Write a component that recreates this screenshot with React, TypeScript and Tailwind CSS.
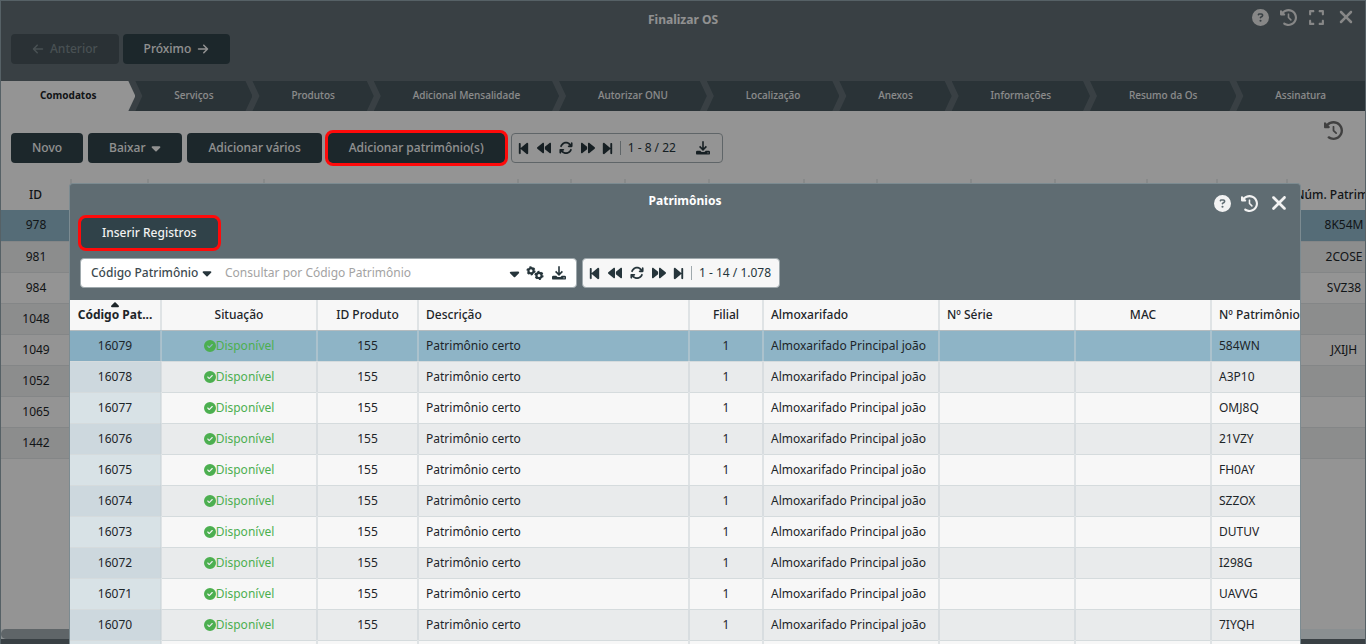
import { useState } from "react";
import {
  FaArrowLeft,
  FaArrowRight,
  FaArrowsRotate,
  FaBackward,
  FaBackwardStep,
  FaCaretDown,
  FaCaretUp,
  FaCircleCheck,
  FaCircleQuestion,
  FaClockRotateLeft,
  FaExpand,
  FaForward,
  FaForwardStep,
  FaXmark,
} from "react-icons/fa6";

const tabs = [
  "Comodatos",
  "Serviços",
  "Produtos",
  "Adicional Mensalidade",
  "Autorizar ONU",
  "Localização",
  "Anexos",
  "Informações",
  "Resumo da Os",
  "Assinatura",
];

const comodatos = [
  { id: "978", numero: "8K54M" },
  { id: "981", numero: "2COSE" },
  { id: "984", numero: "SVZ38" },
  { id: "1048", numero: "" },
  { id: "1049", numero: "JXIJH" },
  { id: "1052", numero: "" },
  { id: "1065", numero: "" },
  { id: "1442", numero: "" },
];

// columns between "ID" and "Núm. Patrimônio"
const innerCols = [
  "w-[77px]",
  "w-[116px]",
  "w-[254px]",
  "w-[53px]",
  "w-[54px]",
  "w-[84px]",
  "w-[95px]",
  "w-[73px]",
  "w-[94px]",
  "w-[84px]",
  "w-[92px]",
  "w-[70px]",
  "w-[70px]",
];

const patrimonios = [
  { codigo: "16079", numero: "584WN" },
  { codigo: "16078", numero: "A3P10" },
  { codigo: "16077", numero: "OMJ8Q" },
  { codigo: "16076", numero: "21VZY" },
  { codigo: "16075", numero: "FH0AY" },
  { codigo: "16074", numero: "SZZOX" },
  { codigo: "16073", numero: "DUTUV" },
  { codigo: "16072", numero: "I298G" },
  { codigo: "16071", numero: "UAVVG" },
  { codigo: "16070", numero: "7IYQH" },
];

function DownloadIcon() {
  return (
    <svg width="14" height="14" viewBox="0 0 14 14" fill="none" aria-hidden="true">
      <path d="M7 0.3V8.6M3.6 5.4L7 8.8L10.4 5.4" stroke="currentColor" strokeWidth="1.6" />
      <path
        d="M1.4 9.8H4.2L5.6 11H8.4L9.8 9.8H12.6Q14 9.8 14 11V12.4Q14 13.6 12.6 13.6H1.4Q0 13.6 0 12.4V11Q0 9.8 1.4 9.8Z"
        fill="currentColor"
      />
      <circle cx="12" cy="11.8" r="0.6" fill="#fff" />
    </svg>
  );
}

function GearsIcon() {
  return (
    <svg width="18" height="14" viewBox="0 0 18 14" fill="none" stroke="currentColor" aria-hidden="true">
      <circle cx="5" cy="4.8" r="2.6" strokeWidth="2.2" />
      <circle cx="5" cy="4.8" r="3.9" strokeWidth="1.4" strokeDasharray="2.04 2.04" />
      <circle cx="13" cy="9.4" r="2.6" strokeWidth="2.2" />
      <circle cx="13" cy="9.4" r="3.9" strokeWidth="1.4" strokeDasharray="2.04 2.04" />
    </svg>
  );
}

function Button({
  children,
  disabled,
  highlighted,
}: {
  children: React.ReactNode;
  disabled?: boolean;
  highlighted?: boolean;
}) {
  return (
    <div className={highlighted ? "relative mx-px" : "relative"}>
      <button
        disabled={disabled}
        className={`flex h-[30px] items-center gap-[6px] rounded px-[21px] font-medium ${
          disabled ? "bg-[#465359] text-[#7a868b]" : "bg-[#304249] text-[#f2f2f2]"
        }`}
      >
        {children}
      </button>
      {highlighted && (
        <span className="pointer-events-none absolute -inset-[3px] z-30 rounded-lg border-3 border-[#ff0a0a]" />
      )}
    </div>
  );
}

function Pager({ range, download }: { range: string; download?: boolean }) {
  return (
    <div className="flex h-[30px] items-center rounded border border-[#9fa9ad] bg-[#f7f7f7] pr-2 pl-[7px] text-[#26353b]">
      <button aria-label="Primeira página" className="w-[10px]">
        <FaBackwardStep size={15} className="-mx-[3px]" />
      </button>
      <button aria-label="Página anterior" className="ml-2">
        <FaBackward size={14} />
      </button>
      <button aria-label="Atualizar" className="ml-2">
        <FaArrowsRotate size={14} />
      </button>
      <button aria-label="Próxima página" className="ml-2">
        <FaForward size={14} />
      </button>
      <button aria-label="Última página" className="ml-2 w-[10px]">
        <FaForwardStep size={15} className="-mx-[3px]" />
      </button>
      <span className="ml-[7px] h-[14px] w-px bg-[#9fa9ad]" />
      <span className="ml-[7px]">{range}</span>
      {download && (
        <button aria-label="Baixar registros" className="mr-1 ml-5">
          <DownloadIcon />
        </button>
      )}
    </div>
  );
}

function ComodatosTable() {
  const line = "border-r-2 border-r-[#e3e6e7]";
  return (
    <div className="flex-1 overflow-hidden">
      <table className="w-[1400px] table-fixed border-collapse">
        <thead>
          <tr className="h-[31px]">
            <th className={`w-[70px] font-medium ${line}`}>ID</th>
            {innerCols.map((width, i) => (
              <td key={i} className={`${width} ${line}`} />
            ))}
            <th className="font-medium whitespace-nowrap">Núm. Patrimônio</th>
          </tr>
        </thead>
        <tbody>
          {comodatos.map((row, i) => (
            <tr
              key={row.id}
              className={`h-[31px] border-b border-[#dcdfe1] text-center ${
                i === 0 ? "bg-[#8eb4c6]" : i % 2 ? "bg-[#e9ebec]" : "bg-[#f7f7f7]"
              }`}
            >
              <td>{row.id}</td>
              <td colSpan={innerCols.length} />
              <td>{row.numero}</td>
            </tr>
          ))}
        </tbody>
      </table>
    </div>
  );
}

function PatrimoniosTable() {
  const [selected, setSelected] = useState("16079");
  const line = "border-r-2 border-r-[#c8d0d3]/50";
  const head = `font-medium ${line}`;

  return (
    <table className="w-full min-w-[1277px] table-fixed border-collapse whitespace-nowrap">
      <thead>
        <tr className="h-[30px] border-b border-[#b4bbbe] bg-[#f7f7f7]">
          <th className={`w-[91px] font-bold ${line}`}>
            <span className="relative">
              <FaCaretUp size={13} className="absolute -top-[7px] left-1/2 -translate-x-1/2" />
              Código Pat...
            </span>
          </th>
          <th className={`w-[156px] ${head}`}>Situação</th>
          <th className={`w-[101px] ${head}`}>ID Produto</th>
          <th className={`w-[271px] px-[7px] text-left ${head}`}>Descrição</th>
          <th className={`w-[74px] ${head}`}>Filial</th>
          <th className={`w-[176px] px-[7px] text-left ${head}`}>Almoxarifado</th>
          <th className={`w-[136px] px-[7px] text-left ${head}`}>Nº Série</th>
          <th className={`w-[136px] ${head}`}>MAC</th>
          <th className="px-[7px] text-left font-medium">Nº Patrimônio</th>
        </tr>
      </thead>
      <tbody>
        {patrimonios.map((row, i) => {
          const active = row.codigo === selected;
          const odd = i % 2 === 1;
          return (
            <tr
              key={row.codigo}
              onClick={() => setSelected(row.codigo)}
              className={`h-[31px] border-b border-[#d5dbdd] ${
                active ? "bg-[#8eb4c6]" : odd ? "bg-[#e9ebec]" : "bg-[#f7f7f7]"
              }`}
            >
              <td
                className={`text-center ${line} ${
                  active ? "bg-[#86adc1]" : odd ? "bg-[#cdd8de]" : "bg-[#d8e2e6]"
                }`}
              >
                {row.codigo}
              </td>
              <td className={`text-[#4caf50] ${line}`}>
                <span className="flex items-center justify-center">
                  <FaCircleCheck size={12} />
                  Disponível
                </span>
              </td>
              <td className={`text-center ${line}`}>155</td>
              <td className={`px-[7px] ${line}`}>Patrimônio certo</td>
              <td className={`text-center ${line}`}>1</td>
              <td className={`px-[7px] ${line}`}>Almoxarifado Principal joão</td>
              <td className={line} />
              <td className={line} />
              <td className="px-[7px]">{row.numero}</td>
            </tr>
          );
        })}
        <tr className="h-[31px] bg-[#f7f7f7]">
          <td className={`bg-[#d8e2e6] ${line}`} />
          <td className={line} />
          <td className={line} />
          <td className={line} />
          <td className={line} />
          <td className={line} />
          <td className={line} />
          <td className={line} />
          <td />
        </tr>
      </tbody>
    </table>
  );
}

function PatrimoniosDialog() {
  return (
    <section
      role="dialog"
      aria-labelledby="patrimonios-title"
      className="absolute top-[182px] right-[64px] bottom-0 left-[68px] z-20 overflow-hidden rounded-t border border-b-0 border-[#7c8b91] bg-[#5f6c72]"
    >
      <header className="relative pt-2">
        <h2 id="patrimonios-title" className="text-center leading-[18px] font-bold text-white">
          Patrimônios
        </h2>
        <div className="absolute top-2 right-[10px] flex items-center gap-[10px] text-[#f2f2f2]">
          <button aria-label="Ajuda">
            <FaCircleQuestion size={17} />
          </button>
          <button aria-label="Histórico">
            <FaClockRotateLeft size={17} />
          </button>
          <button aria-label="Fechar">
            <FaXmark size={22} />
          </button>
        </div>
      </header>

      <div className="mt-2 flex pl-[10px]">
        <Button highlighted>Inserir Registros</Button>
      </div>

      <div className="mt-[10px] mb-3 flex gap-[5px] pl-[10px]">
        <div className="flex h-[30px] w-[497px] items-center rounded border border-[#9fa9ad] bg-white px-[10px] text-[#26353b]">
          <select aria-label="Campo de busca" className="appearance-none font-medium text-[#3c4a50]">
            <option>Código Patrimônio</option>
          </select>
          <FaCaretDown size={14} className="ml-px" />
          <input
            aria-label="Consultar"
            placeholder="Consultar por Código Patrimônio"
            className="ml-[11px] min-w-0 flex-1 outline-none placeholder:text-[#a3a3a3]"
          />
          <button aria-label="Opções">
            <FaCaretDown size={15} />
          </button>
          <button aria-label="Configurações" className="ml-1">
            <GearsIcon />
          </button>
          <button aria-label="Exportar" className="ml-2">
            <DownloadIcon />
          </button>
        </div>
        <Pager range="1 - 14 / 1.078" />
      </div>

      <PatrimoniosTable />
    </section>
  );
}

export default function App() {
  return (
    <div className="relative flex h-screen flex-col overflow-hidden border-x border-t border-[#566166] bg-[#5f6c72] font-['Noto_Sans',sans-serif] text-[12px] text-[#1d2529]">
      {/* Window header */}
      <header className="relative pt-[10px]">
        <h1 className="text-center leading-[18px] font-bold text-[#f2f2f2]">Finalizar OS</h1>
        <div className="absolute top-[6px] right-[9px] flex items-center gap-[11px] text-[#e2e2e2]">
          <button aria-label="Ajuda">
            <FaCircleQuestion size={17} />
          </button>
          <button aria-label="Histórico">
            <FaClockRotateLeft size={17} />
          </button>
          <button aria-label="Tela cheia">
            <FaExpand size={17} />
          </button>
          <button aria-label="Fechar">
            <FaXmark size={20} />
          </button>
        </div>
        <div className="mt-[5px] flex gap-1 px-[10px] pb-[17px]">
          <Button disabled>
            <FaArrowLeft size={12} />
            Anterior
          </Button>
          <Button>
            Próximo
            <FaArrowRight size={12} />
          </Button>
        </div>
      </header>

      {/* Steps */}
      <nav className="flex h-[30px] text-[10px] font-medium">
        {tabs.map((tab, i) => (
          <button
            key={tab}
            className={`flex-auto px-[38px] pb-[2px] whitespace-nowrap ${
              i === 0
                ? "bg-[#f7f7f7] font-bold [clip-path:polygon(0_0,calc(100%-7px)_0,100%_50%,calc(100%-7px)_100%,0_100%)]"
                : i === tabs.length - 1
                  ? "bg-[#46555c] text-[#e8e8e8] [clip-path:polygon(0_0,100%_0,100%_100%,0_100%,7px_50%)]"
                  : "bg-[#46555c] text-[#e8e8e8] [clip-path:polygon(0_0,calc(100%-7px)_0,100%_50%,calc(100%-7px)_100%,0_100%,7px_50%)]"
            }`}
          >
            {tab}
          </button>
        ))}
      </nav>

      <main className="flex min-h-0 flex-1 flex-col bg-[#f7f7f7]">
        <div className="flex items-start justify-between pr-[22px] pb-4 pl-[10px]">
          <div className="flex gap-[5px] pt-[22px]">
            <Button>Novo</Button>
            <Button>
              Baixar
              <FaCaretDown size={14} className="-mx-[2px]" />
            </Button>
            <Button>Adicionar vários</Button>
            <Button highlighted>Adicionar patrimônio(s)</Button>
            <Pager range="1 - 8 / 22" download />
          </div>
          <button aria-label="Histórico" className="mt-[10px] text-[#6b6b6b]">
            <FaClockRotateLeft size={19} />
          </button>
        </div>
        <ComodatosTable />
        <div className="h-[10px] bg-[#e7eff2]">
          <div className="h-full w-4/5 rounded-full bg-[#9ea9ae]" />
        </div>
      </main>
      <footer className="h-[5px]" />

      <div className="absolute inset-0 z-10 bg-black/40" />
      <PatrimoniosDialog />
    </div>
  );
}
